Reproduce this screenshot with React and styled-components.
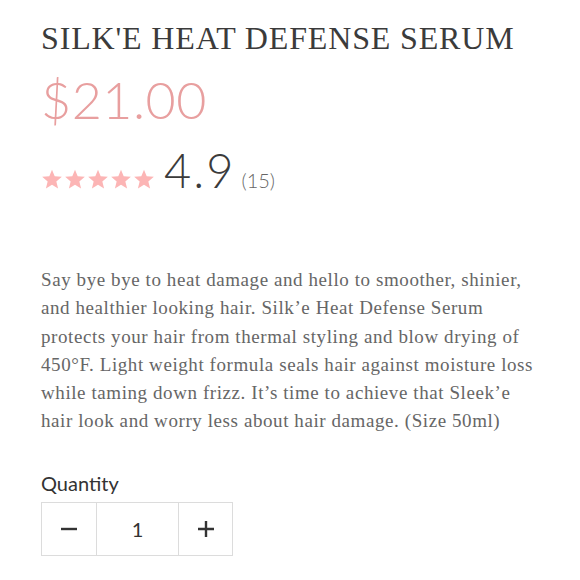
import React from "react";
import styled, { createGlobalStyle } from "styled-components";

const Global = createGlobalStyle`
  html, body { margin: 0; padding: 0; background: #fff; }
  body { width: 580px; height: 580px; overflow: hidden; }
`;

const Page = styled.div`
  padding: 19px 0 0 41px;
  display: flex;
  flex-direction: column;
`;

const Title = styled.h1`
  margin: 0;
  font-family: "Liberation Serif", "Times New Roman", serif;
  font-weight: 400;
  font-size: 32px;
  line-height: 38px;
  letter-spacing: 0.85px;
  color: #3b3b3b;
`;

const Price = styled.div`
  margin-top: 12px;
  font-family: Lato, "Noto Sans", sans-serif;
  font-weight: 300;
  font-size: 52px;
  line-height: 60px;
  color: #e89f9f;
  letter-spacing: 0.5px;
`;

const RatingRow = styled.div`
  margin-top: 16px;
  display: flex;
  align-items: baseline;
  gap: 9px;
`;

const Stars = styled.div`
  display: flex;
  gap: 1px;
  align-self: flex-end;
  padding-bottom: 6px;
`;

const Score = styled.span`
  font-family: Lato, "Noto Sans", sans-serif;
  font-weight: 300;
  font-size: 47px;
  line-height: 50px;
  color: #3b3b3b;
  letter-spacing: 2px;
`;

const Count = styled.span`
  font-family: Lato, "Noto Sans", sans-serif;
  font-weight: 300;
  font-size: 20px;
  color: #666;
  margin-left: -3px;
`;

const Description = styled.p`
  margin: 71px 0 0 0;
  width: 500px;
  font-family: "Liberation Serif", "Times New Roman", serif;
  font-size: 19px;
  line-height: 28.3px;
  letter-spacing: 0.58px;
  color: #666;
`;

const QtyLabel = styled.div`
  margin-top: 35px;
  font-family: Lato, "Noto Sans", sans-serif;
  font-size: 20px;
  line-height: 24px;
  color: #333;
`;

const Stepper = styled.div`
  margin-top: 7px;
  display: grid;
  grid-template-columns: 54px 82px 54px;
  width: 192px;
  height: 54px;
  box-sizing: border-box;
  border: 1px solid #dcdcdc;
`;

const Cell = styled.div`
  display: flex;
  align-items: center;
  justify-content: center;
  border-left: ${(p) => (p.$divider ? "1px solid #dcdcdc" : "none")};
  font-family: Lato, "Noto Sans", sans-serif;
  font-size: 20px;
  color: #333;
`;

const Star = () => (
  <svg width="22" height="20" viewBox="0 0 24 23">
    <path
      d="M12 0.8l3.1 7.6 8.2 0.6-6.3 5.3 2 8-7-4.3-7 4.3 2-8L0.7 9l8.2-0.6z"
      fill="#fcb5b5"
    />
  </svg>
);

const Minus = () => (
  <svg width="18" height="18" viewBox="0 0 18 18">
    <path d="M1 9h16" stroke="#333" strokeWidth="2.4" />
  </svg>
);

const Plus = () => (
  <svg width="18" height="18" viewBox="0 0 18 18">
    <path d="M1 9h16M9 1v16" stroke="#333" strokeWidth="2.4" />
  </svg>
);

export default function App() {
  return (
    <>
      <Global />
      <Page>
        <Title>SILK'E HEAT DEFENSE SERUM</Title>
        <Price>$21.00</Price>
        <RatingRow>
          <Stars>
            {[0, 1, 2, 3, 4].map((i) => (
              <Star key={i} />
            ))}
          </Stars>
          <Score>4.9</Score>
          <Count>(15)</Count>
        </RatingRow>
        <Description>
          Say bye bye to heat damage and hello to smoother, shinier, and
          healthier looking hair. Silk’e Heat Defense Serum protects your hair
          from thermal styling and blow drying of 450°F. Light weight formula
          seals hair against moisture loss while taming down frizz. It’s time
          to achieve that Sleek’e hair look and worry less about hair damage.
          (Size 50ml)
        </Description>
        <QtyLabel>Quantity</QtyLabel>
        <Stepper>
          <Cell>
            <Minus />
          </Cell>
          <Cell $divider>1</Cell>
          <Cell $divider>
            <Plus />
          </Cell>
        </Stepper>
      </Page>
    </>
  );
}
